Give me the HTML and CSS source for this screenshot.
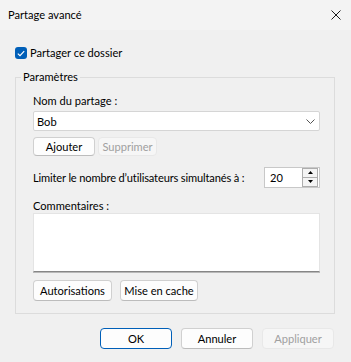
FILE: index.html
```html
<!DOCTYPE html>
<html lang="fr">
<head>
<meta charset="utf-8">
<title>Partage avancé</title>
<link rel="stylesheet" href="styles.css">
</head>
<body>
<div class="window">
  <div class="titlebar">
    <span class="title">Partage avancé</span>
    <svg class="close" width="10" height="10" viewBox="0 0 10 10"><path d="M0.5 0.5 L9.5 9.5 M9.5 0.5 L0.5 9.5" stroke="#1a1a1a" stroke-width="1" fill="none"/></svg>
  </div>
  <div class="content">
    <div class="check-row">
      <span class="checkbox"><svg width="8" height="7" viewBox="0 0 8 7"><path d="M0.8 3.6 L3 5.6 L7.2 1.2" stroke="#fff" stroke-width="1.2" fill="none"/></svg></span>
      <span>Partager ce dossier</span>
    </div>
    <fieldset class="group">
      <legend>Paramètres</legend>
      <div class="group-inner">
        <div class="field-label">Nom du partage :</div>
        <div class="combo">
          <span>Bob</span>
          <svg width="9" height="5" viewBox="0 0 9 5"><path d="M0.5 0.5 L4.5 4.5 L8.5 0.5" stroke="#555" stroke-width="1" fill="none"/></svg>
        </div>
        <div class="btn-row tight">
          <button class="btn w-ajouter">Ajouter</button>
          <button class="btn disabled w-supprimer">Supprimer</button>
        </div>
        <div class="limit-row">
          <span class="limit-label">Limiter le nombre d’utilisateurs simultanés à :</span>
          <div class="spin">
            <span class="spin-value">20</span>
            <div class="spin-buttons">
              <span class="spin-btn"><svg width="5" height="3" viewBox="0 0 5 3"><path d="M2.5 0 L5 3 L0 3 Z" fill="#000"/></svg></span>
              <span class="spin-btn"><svg width="5" height="3" viewBox="0 0 5 3"><path d="M0 0 L5 0 L2.5 3 Z" fill="#000"/></svg></span>
            </div>
          </div>
        </div>
        <div class="field-label comments-label">Commentaires :</div>
        <div class="textarea"></div>
        <div class="btn-row wide">
          <button class="btn w-autorisations">Autorisations</button>
          <button class="btn w-cache">Mise en cache</button>
        </div>
      </div>
    </fieldset>
    <div class="footer">
      <button class="btn default w-dialog">OK</button>
      <button class="btn w-dialog">Annuler</button>
      <button class="btn disabled w-dialog">Appliquer</button>
    </div>
  </div>
</div>
</body>
</html>
```
FILE: styles.css
```css
* { box-sizing: border-box; }
html, body {
  margin: 0;
  padding: 0;
  background: #f0f0f0;
}
body {
  font-family: "Lato", "Noto Sans", sans-serif;
  font-size: 11.1px;
  color: #000;
}
.window {
  width: 351px;
  height: 362px;
  background: #f0f0f0;
  display: flex;
  flex-direction: column;
}
.titlebar {
  height: 30px;
  background: #f3f3f3;
  display: flex;
  align-items: center;
  justify-content: space-between;
  padding: 0 10px 0 8px;
  line-height: 16px;
}
.close { display: block; margin-top: -1px; }
.content {
  padding: 15px 0 0 15px;
}
.check-row {
  display: flex;
  align-items: center;
  height: 16px;
  line-height: 16px;
  gap: 3px;
}
.checkbox {
  width: 12px;
  height: 12px;
  border-radius: 3px;
  background: #005fb8;
  display: flex;
  align-items: center;
  justify-content: center;
}
.checkbox svg { display: block; }
.group {
  margin: 8px 0 0 0;
  padding: 0;
  width: 320px;
  border: 1px solid #dcdcdc;
  border-radius: 0;
  min-width: 0;
}
.group legend {
  margin-left: 5px;
  padding: 0 2px;
  line-height: 16px;
}
.group-inner {
  padding: 8px 14px 12px 17px;
  display: flex;
  flex-direction: column;
}
.field-label {
  line-height: 16px;
  height: 16px;
}
.combo {
  margin-top: 2px;
  height: 20px;
  background: #fff;
  border: 1px solid #d5d5d5;
  border-radius: 2px;
  display: flex;
  align-items: center;
  justify-content: space-between;
  padding: 0 4px 0 3px;
}
.combo svg { display: block; margin-top: 1px; }
.btn-row { display: flex; }
.btn-row.tight { margin-top: 6px; gap: 3px; }
.btn-row.wide { margin-top: 8px; gap: 8px; }
.btn {
  font-family: inherit;
  font-size: 11.1px;
  color: #000;
  background: #fdfdfd;
  border: 1px solid #d0d0d0;
  border-bottom-color: #bcbcbc;
  border-radius: 4px;
  height: 21px;
  padding: 0;
  line-height: 18px;
  text-align: center;
  white-space: nowrap;
}
.btn-row.tight .btn { height: 19px; line-height: 16px; }
.btn.disabled {
  background: #f6f6f6;
  border-color: #e8e8e8;
  color: #a0a0a0;
}
.btn.default {
  border: 1px solid #005fb8;
}
.w-ajouter { width: 62px; }
.w-supprimer { width: 59px; }
.w-autorisations { width: 79px; }
.w-cache { width: 78px; }
.w-dialog { width: 72px; }
.limit-row {
  margin-top: 11px;
  display: flex;
  align-items: center;
  justify-content: space-between;
  height: 20px;
}
.limit-label { white-space: nowrap; letter-spacing: -0.15px; }
.spin {
  width: 56px;
  height: 21px;
  background: #fff;
  border: 1px solid #c8c8c8;
  display: flex;
  justify-content: space-between;
  flex-shrink: 0;
}
.spin-value {
  padding-left: 5px;
  line-height: 20px;
}
.spin-buttons {
  display: flex;
  flex-direction: column;
  width: 16px;
  margin: 0 1px 0 0;
}
.spin-btn {
  flex: 1;
  border: 1px solid #adadad;
  background: #f4f4f4;
  display: flex;
  align-items: center;
  justify-content: center;
}
.spin-btn + .spin-btn { border-top: none; }
.spin-btn svg { display: block; }
.comments-label {
  margin-top: 12px;
  height: 14px;
  line-height: 14px;
}
.textarea {
  height: 59px;
  background: #fff;
  border: 1px solid #e4e4e4;
  border-bottom: 1px solid #868686;
  box-shadow: 0 1px 0 #b8b8b8;
}
.footer {
  margin-top: 14px;
  display: flex;
  justify-content: flex-end;
  gap: 9px;
  padding-right: 17px;
}
```
